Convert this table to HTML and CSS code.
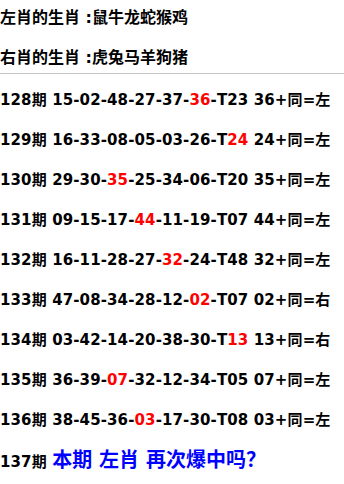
FILE: index.html
```html
<!DOCTYPE html>
<html lang="zh">
<head>
<meta charset="utf-8">
<link rel="stylesheet" href="styles.css">
</head>
<body>
<div class="head">
  <div class="head-line">左肖的生肖 :鼠牛龙蛇猴鸡</div>
  <div class="head-line">右肖的生肖 :虎兔马羊狗猪</div>
</div>
<hr class="rule">
<div class="rows">
  <div class="row">128期 15-02-48-27-37-<span class="hit">36</span>-T23 36+同=左</div>
  <div class="row">129期 16-33-08-05-03-26-T<span class="hit">24</span> 24+同=左</div>
  <div class="row">130期 29-30-<span class="hit">35</span>-25-34-06-T20 35+同=左</div>
  <div class="row">131期 09-15-17-<span class="hit">44</span>-11-19-T07 44+同=左</div>
  <div class="row">132期 16-11-28-27-<span class="hit">32</span>-24-T48 32+同=左</div>
  <div class="row">133期 47-08-34-28-12-<span class="hit">02</span>-T07 02+同=右</div>
  <div class="row">134期 03-42-14-20-38-30-T<span class="hit">13</span> 13+同=右</div>
  <div class="row">135期 36-39-<span class="hit">07</span>-32-12-34-T05 07+同=左</div>
  <div class="row">136期 38-45-36-<span class="hit">03</span>-17-30-T08 03+同=左</div>
  <div class="row">137期 <span class="next">本期 左肖 再次爆中吗？</span></div>
</div>
</body>
</html>
```
FILE: styles.css
```css
html, body {
  margin: 0;
  padding: 0;
  background: #ffffff;
}
body {
  font-family: "DejaVu Sans", "Noto Sans CJK SC", sans-serif;
  color: #000000;
  font-weight: bold;
}
.head {
  display: flex;
  flex-direction: column;
  gap: 10px;
  padding-top: 3px;
}
.head-line {
  font-size: 16px;
  line-height: 30px;
  height: 30px;
  white-space: nowrap;
}
.rule {
  margin: 0 0 6px 0;
  border: 0;
  border-top: 1px solid #c4c4c4;
  height: 0;
}
.rows {
  display: flex;
  flex-direction: column;
}
.row {
  font-size: 15px;
  line-height: 40px;
  height: 40px;
  letter-spacing: 0.12px;
  white-space: nowrap;
}
.hit {
  color: #ff0000;
}
.next {
  color: #0000ff;
  font-size: 20px;
  letter-spacing: 0;
}
```
